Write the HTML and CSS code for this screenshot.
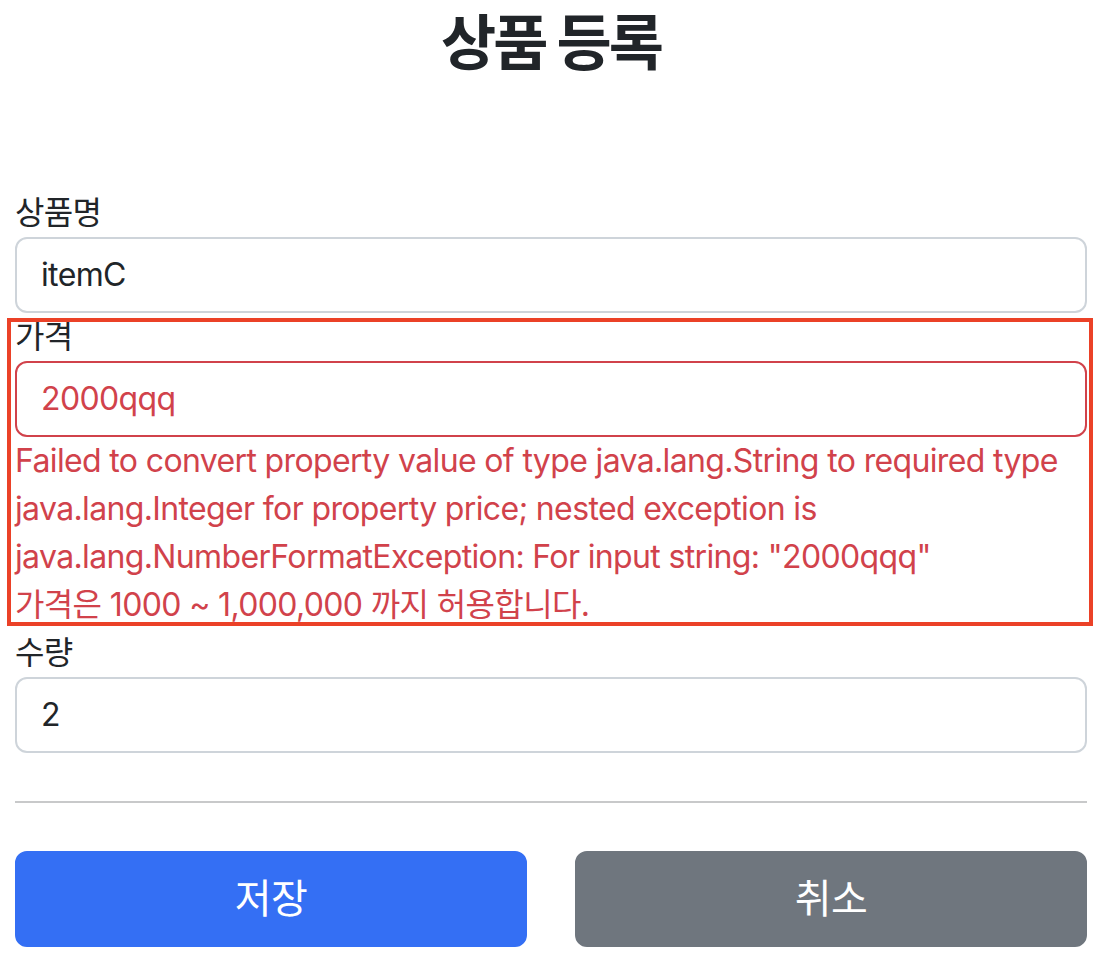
FILE: index.html
```html
<!DOCTYPE html>
<html lang="ko">
<head>
    <meta charset="UTF-8">
    <meta name="viewport" content="width=device-width, initial-scale=1.0">
    <title>상품 등록</title>
    <link rel="stylesheet" href="styles.css">
</head>
<body>
    <div class="container">
        <div class="page-header">
            <h2>상품 등록</h2>
        </div>

        <form action="#" method="post">
            <div class="field">
                <label for="itemName">상품명</label>
                <input type="text" id="itemName" name="itemName" class="form-control" value="itemC">
            </div>

            <!-- 검증 실패한 필드 -->
            <div class="field marked">
                <label for="price">가격</label>
                <input type="text" id="price" name="price" class="form-control field-error" value="2000qqq">
                <div class="field-error">Failed to convert property value of type java.lang.String to required type java.lang.Integer for property price; nested exception is java.lang.NumberFormatException: For input string: "2000qqq"</div>
                <div class="field-error">가격은 1000 ~ 1,000,000 까지 허용합니다.</div>
            </div>

            <div class="field">
                <label for="quantity">수량</label>
                <input type="text" id="quantity" name="quantity" class="form-control" value="2">
            </div>

            <hr>

            <div class="buttons">
                <button class="btn btn-primary" type="submit">저장</button>
                <button class="btn btn-secondary" type="button">취소</button>
            </div>
        </form>
    </div>
</body>
</html>
```

FILE: styles.css
```css
body {
    font-family: Inter, "Noto Sans CJK KR", sans-serif;
    font-size: 32px;
    line-height: 1.5;
    letter-spacing: -0.02em;
    color: #212529;
    background-color: #fff;
    margin: 0;
    padding: 0;
}

.container {
    max-width: 1072px;
    margin-left: 15px;
}

.page-header {
    padding-bottom: 96px;
    text-align: center;
}

.page-header h2 {
    font-size: 60px;
    font-weight: 700;
    line-height: 77px;
    letter-spacing: -3px;
    margin: 0 0 11px;
    padding-top: 5px;
}

form {
    margin: 0;
}

.field {
    position: relative;
}

/* 빨간 표시 상자 */
.field.marked::after {
    content: "";
    position: absolute;
    top: 5px;
    bottom: 3px;
    left: -8px;
    right: -6px;
    border: 4px solid #eb4127;
    pointer-events: none;
}

label {
    display: block;
}

.form-control {
    display: block;
    width: 100%;
    box-sizing: border-box;
    padding: 12px 24px;
    font-family: inherit;
    font-size: 32px;
    line-height: 48px;
    letter-spacing: inherit;
    color: #212529;
    background-color: #fff;
    border: 2px solid #ced4da;
    border-radius: 12px;
    margin: 0;
}

.field-error {
    color: #d1424b;
}

.form-control.field-error {
    border-color: #d1424b;
}

hr {
    margin: 48px 0;
    border: 0;
    border-top: 2px solid #c8c9ca;
}

.buttons {
    display: grid;
    grid-template-columns: 1fr 1fr;
    gap: 48px;
}

.btn {
    font-family: inherit;
    font-size: 40px;
    line-height: 60px;
    letter-spacing: inherit;
    padding: 16px 32px;
    border: 2px solid transparent;
    border-radius: 12px;
    color: #fff;
}

.btn-primary {
    background-color: #346ff4;
    border-color: #346ff4;
}

.btn-secondary {
    background-color: #6f767e;
    border-color: #6f767e;
}
```
